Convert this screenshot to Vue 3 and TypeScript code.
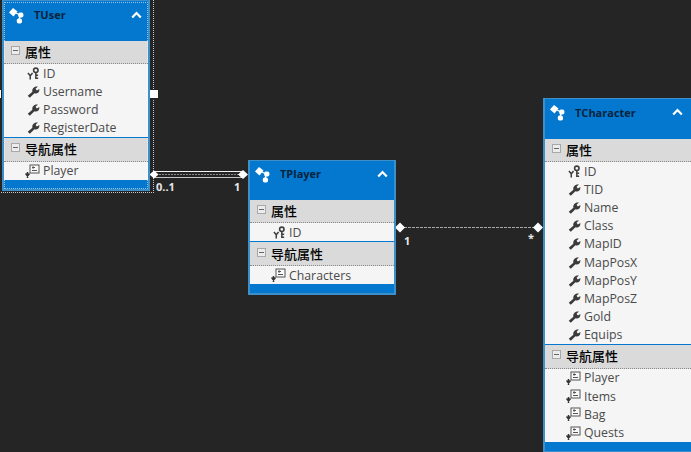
<script setup lang="ts">
interface Row { name: string; icon: 'key' | 'wrench' | 'nav' }
interface Entity {
  id: string; title: string; left: number; top: number;
  props: Row[]; navs: Row[];
}
const p = (name: string): Row => ({ name, icon: 'wrench' })
const n = (name: string): Row => ({ name, icon: 'nav' })
const key: Row = { name: 'ID', icon: 'key' }
const entities: Entity[] = [
  { id: 'user', title: 'TUser', left: 2, top: 0, props: [key, p('Username'), p('Password'), p('RegisterDate')], navs: [n('Player')] },
  { id: 'player', title: 'TPlayer', left: 248, top: 160, props: [key], navs: [n('Characters')] },
  { id: 'character', title: 'TCharacter', left: 543, top: 98,
    props: [key, p('TID'), p('Name'), p('Class'), p('MapID'), p('MapPosX'), p('MapPosY'), p('MapPosZ'), p('Gold'), p('Equips')],
    navs: [n('Player'), n('Items'), n('Bag'), n('Quests')] },
]
const labels = [
  { t: '0..1', x: 156, y: 180 },
  { t: '1', x: 234, y: 180 },
  { t: '1', x: 404, y: 234 },
  { t: '*', x: 528, y: 231 },
]
</script>

<template>
  <div class="canvas">
    <div class="selection"></div>
    <div class="handle" style="left: 149px; top: 89px"></div>
    <div class="handle" style="left: -8px; top: 89px"></div>

    <svg class="wires" width="691" height="452">
      <path d="M153 171.5H243" stroke="#f2f2f2" stroke-width="1" fill="none" />
      <path d="M153 177.5H243" stroke="#c4c4c4" stroke-width="1" fill="none" />
      <path d="M153 174.5H243" stroke="#8a8a8a" stroke-width="1" stroke-dasharray="2 1" fill="none" />
      <path d="M400 227.5H538" stroke="#a8a8a8" stroke-width="1" stroke-dasharray="3 1" fill="none" />
      <path d="M154 170.5l4.5 4-4.5 4-4.5-4zM243 170l5 4.5-5 4.5-5-4.5zM400 222.5l5 5-5 5-5-5zM538 222.5l5 5-5 5-5-5z" fill="#fff" />
    </svg>

    <span v-for="l in labels" :key="l.x" class="label" :style="{ left: l.x + 'px', top: l.y + 'px' }">{{ l.t }}</span>

    <section v-for="e in entities" :key="e.id" class="entity" :class="e.id" :style="{ left: e.left + 'px', top: e.top + 'px' }">
      <header class="head">
        <svg class="logo" width="16" height="16" viewBox="0 0 16 16">
          <path d="M0 4.5 4-.0 8.5 3.6 4.5 8.5z" fill="#fff" />
          <path d="M7 5l5 2.5M11 8l-1 4.5" stroke="#fff" stroke-width="1.3" fill="none" />
          <rect x="9.2" y="4.6" width="5.2" height="5" rx="1.8" fill="#fff" />
          <rect x="7.8" y="10.6" width="5.2" height="5" rx="1.8" fill="#fff" />
        </svg>
        <span class="title">{{ e.title }}</span>
        <svg class="chev" width="11" height="8" viewBox="0 0 11 8">
          <path d="M1.2 6.5 5.5 2l4.3 4.5" stroke="#fff" stroke-width="2.2" fill="none" />
        </svg>
      </header>

      <div class="group">
        <svg class="minus" width="9" height="9" viewBox="0 0 9 9"><rect x=".5" y=".5" width="8" height="8" fill="#ececec" stroke="#a8a8a8" /><path d="M2 4.5h5" stroke="#666" /></svg>
        <span>属性</span>
      </div>
      <ul class="rows">
        <li v-for="r in e.props" :key="r.name" class="row">
          <svg class="ico" width="13" height="13" viewBox="0 0 14 14">
            <template v-if="r.icon === 'key'">
              <circle cx="9.5" cy="3.6" r="2.4" fill="none" stroke="#3d3d3d" stroke-width="1.7" />
              <path d="M9.5 6v7M9.5 9h2.5M9.5 12h2.5" stroke="#3d3d3d" stroke-width="1.6" fill="none" />
              <path d="M1 6.5l2.5 3 2.5-3M3.5 9v4.5" stroke="#3d3d3d" stroke-width="1.6" fill="none" />
            </template>
            <path v-else d="M0.8 11.6 5.8 7.2C5 4.2 7.6 0.9 11.8 1.6L9.2 4l1.4 2 2.8-1.8C13.6 8 10.6 10 8 9L3 13.6z" fill="#3a3a3a" />
          </svg>
          <span>{{ r.name }}</span>
        </li>
      </ul>

      <div class="group second">
        <svg class="minus" width="9" height="9" viewBox="0 0 9 9"><rect x=".5" y=".5" width="8" height="8" fill="#ececec" stroke="#a8a8a8" /><path d="M2 4.5h5" stroke="#666" /></svg>
        <span>导航属性</span>
      </div>
      <ul class="rows">
        <li v-for="r in e.navs" :key="r.name" class="row">
          <svg class="ico nav" width="15" height="14" viewBox="0 0 15 14">
            <rect x="5" y="1" width="9" height="8" fill="#fafafa" stroke="#555" />
            <path d="M7 3.5h3M7 6.5h5M7 3.5l1.5-1M7 3.5l1.5 1" stroke="#555" fill="none" />
            <path d="M2.5 8v6M.5 9.5l2 2.5 2-2.5" stroke="#333" stroke-width="1.5" fill="none" />
          </svg>
          <span>{{ r.name }}</span>
        </li>
      </ul>
      <div class="foot"></div>
    </section>
  </div>
</template>

<style>
html, body { margin: 0; background: #252525; overflow: hidden; }
</style>

<style scoped>
.canvas {
  position: relative;
  width: 691px;
  height: 452px;
  overflow: hidden;
  background: #252525;
  font-family: "Open Sans", "Noto Sans", "Noto Sans CJK SC", sans-serif;
}
.selection {
  position: absolute;
  left: -6px;
  top: -6px;
  width: 158px;
  height: 197px;
  border: 1px dotted #c8c8c8;
}
.handle {
  position: absolute;
  width: 8px;
  height: 8px;
  background: #fff;
  border: 1px solid #222;
}
.wires { position: absolute; left: 0; top: 0; }
.label {
  position: absolute;
  color: #e8e8e8;
  font-size: 11px;
  font-weight: 700;
  line-height: 14px;
}
.entity {
  position: absolute;
  width: 148px;
  box-sizing: border-box;
  border: 1px solid #3e8fc8;
  border-width: 1px 2px 2px 2px;
  background: #0478cf;
  display: flex;
  flex-direction: column;
}
.character { width: 150px; }
.user { height: 191px; outline: 1px dotted rgba(255, 255, 255, .55); outline-offset: -3px; }
.head {
  height: 39px;
  display: flex;
  align-items: flex-start;
  padding: 5px 6px 0 5px;
  box-sizing: border-box;
}
.user .head, .character .head { height: 40px; }
.user .head { padding-top: 6px; }
.character .head { padding-right: 8px; }
.logo { flex: none; margin-top: 1px; }
.title {
  margin-left: 9px;
  color: #06233c;
  font-size: 11px;
  font-weight: 700;
  line-height: 16px;
  flex: 1;
}
.character .title { margin-top: 1px; }
.chev { flex: none; margin-top: 4px; }
.group {
  height: 23px;
  box-sizing: border-box;
  background: #dadada;
  border-bottom: 1px dotted #8a8a8a;
  display: flex;
  align-items: center;
  padding-left: 7px;
  gap: 5px;
  font-size: 13px;
  line-height: 18px;
  color: #000;
  font-family: "Noto Sans CJK SC", sans-serif;
  font-weight: 500;
}
.group.second { border-top: 1px solid #0478cf; height: 25px; }
.minus { flex: none; margin-top: -3px; }
.rows { list-style: none; margin: 0; padding: 0; background: #f5f5f5; }
.row {
  height: 18.2px;
  display: flex;
  align-items: center;
  padding-left: 23px;
  color: #4a4a4a;
  font-size: 12.3px;
  white-space: nowrap;
}
.ico { flex: none; margin-right: 3px; }
.ico.nav { margin-left: -2px; margin-right: 3px; }
.foot { height: 9px; background: #0478cf; }
</style>
